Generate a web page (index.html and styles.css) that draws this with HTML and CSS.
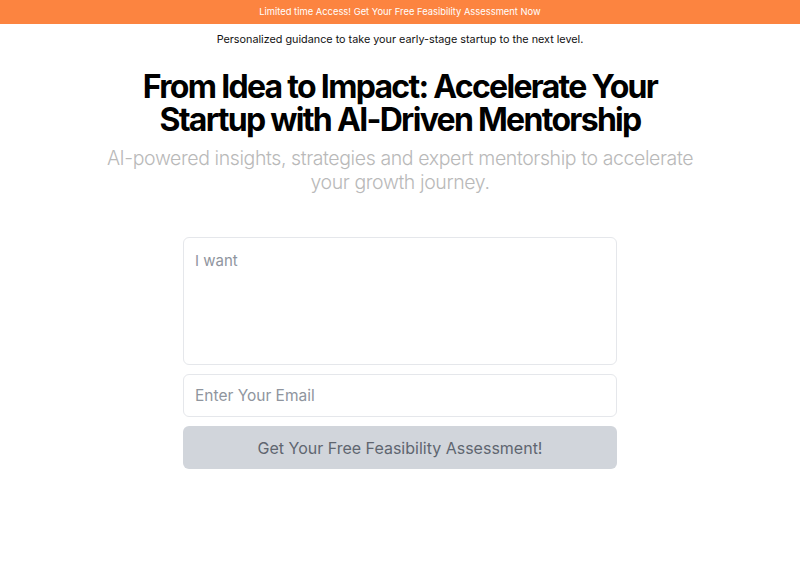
FILE: index.html
```html
<!DOCTYPE html>
<html lang="en">
<head>
    <meta charset="UTF-8">
    <meta name="viewport" content="width=device-width, initial-scale=1.0">
    <title>From Idea to Impact</title>
    <link rel="stylesheet" href="styles.css">
</head>
<body>
    <div class="banner">Limited time Access! Get Your Free Feasibility Assessment Now</div>

    <main class="hero">
        <p class="tagline">Personalized guidance to take your early-stage startup to the next level.</p>
        <h1>From Idea to Impact: Accelerate Your Startup with AI-Driven Mentorship</h1>
        <p class="subtitle">AI-powered insights, strategies and expert mentorship to accelerate your growth journey.</p>

        <form class="lead-form">
            <textarea placeholder="I want"></textarea>
            <input type="email" placeholder="Enter Your Email">
            <button type="button" disabled>Get Your Free Feasibility Assessment!</button>
        </form>
    </main>
</body>
</html>
```

FILE: styles.css
```css
body {
    margin: 0;
    font-family: Inter, "Noto Sans", sans-serif;
    background-color: #fff;
    color: #111;
}
.banner {
    background-color: #fc8440;
    color: #fff;
    font-size: 9.4px;
    height: 24px;
    line-height: 24px;
    text-align: center;
}
.hero {
    display: flex;
    flex-direction: column;
    align-items: center;
    text-align: center;
}
.tagline {
    margin: 9px 0 0;
    font-size: 10.8px;
    line-height: 14px;
    color: #111;
}
h1 {
    margin: 23px 0 0;
    width: 560px;
    font-size: 32px;
    line-height: 33px;
    font-weight: 700;
    letter-spacing: -1.7px;
    color: #000;
}
.subtitle {
    margin: 10px 0 0;
    width: 620px;
    font-size: 19.5px;
    line-height: 24px;
    font-weight: 300;
    letter-spacing: -0.4px;
    color: #b9b9b9;
}
.lead-form {
    display: flex;
    flex-direction: column;
    gap: 9px;
    width: 434px;
    margin-top: 43px;
}
textarea, input {
    box-sizing: border-box;
    width: 100%;
    border: 1px solid #e5e7eb;
    border-radius: 6px;
    font-family: inherit;
    font-size: 15px;
    padding: 12px 11px;
    color: #333;
    outline: none;
}
textarea {
    height: 128px;
    resize: none;
    padding-top: 13px;
}
input {
    height: 43px;
    font-size: 15.5px;
}
textarea::placeholder, input::placeholder {
    color: #8f959e;
}
button {
    height: 43px;
    border: none;
    border-radius: 6px;
    background-color: #d1d5db;
    color: #5f6670;
    font-family: inherit;
    font-size: 16px;
    cursor: not-allowed;
}
```
